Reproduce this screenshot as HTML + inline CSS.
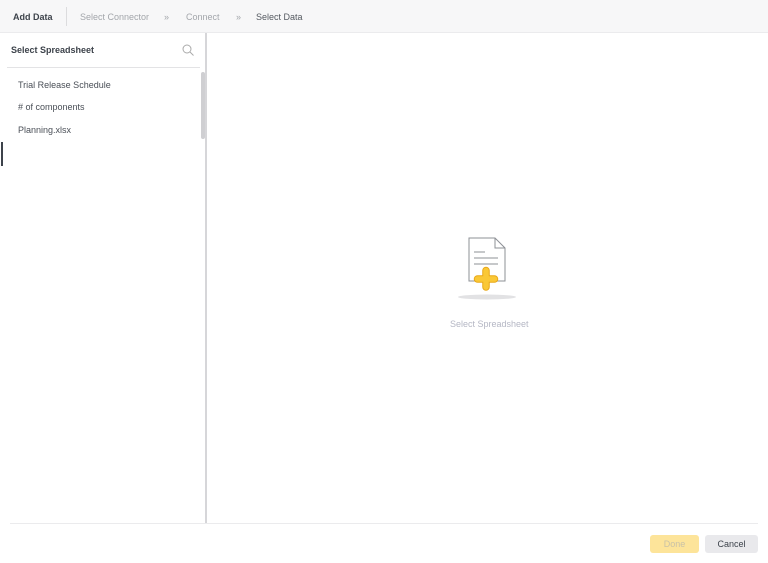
<!DOCTYPE html>
<html><head><style>
*{margin:0;padding:0;box-sizing:border-box}
body{width:768px;height:563px;background:#fff;font-family:"Liberation Sans",sans-serif;font-size:9px;color:#4a4f57;position:relative;overflow:hidden}
.hdr{position:absolute;left:0;top:0;width:768px;height:33px;background:#f7f7f8;border-bottom:1px solid #ebebed}
.hdr span{position:absolute;top:12px}
.left{position:absolute;left:0;top:33px;width:207px;height:490px;border-right:2px solid #d6d6d9}
.foot{position:absolute;left:10px;right:10px;top:523px;border-top:1px solid #ebebed}
</style></head><body>
<div class="hdr">
<span style="left:13px;font-weight:bold;color:#3d434b">Add Data</span>
<div style="position:absolute;left:66px;top:7px;width:1px;height:19px;background:#dcdcde"></div>
<span style="left:80px;color:#a3a6ab">Select Connector</span>
<span style="left:164px;color:#a3a6ab">»</span>
<span style="left:186px;color:#a3a6ab">Connect</span>
<span style="left:236px;color:#a3a6ab">»</span>
<span style="left:256px;color:#555a61">Select Data</span>
</div>
<div class="left">
<div style="position:absolute;left:11px;top:12px;font-weight:bold;color:#3d434b">Select Spreadsheet</div>
<svg style="position:absolute;left:182px;top:11px" width="12" height="12" viewBox="0 0 12 12"><circle cx="5" cy="5" r="4" fill="none" stroke="#aaa" stroke-width="1"/><line x1="8" y1="8" x2="11.5" y2="11.5" stroke="#aaa"/></svg>
<div style="position:absolute;left:7px;top:34px;width:193px;height:1px;background:#e3e3e5"></div>
<div style="position:absolute;left:18px;top:47px">Trial Release Schedule</div>
<div style="position:absolute;left:18px;top:69px"># of components</div>
<div style="position:absolute;left:18px;top:92px">Planning.xlsx</div>
<div style="position:absolute;left:201px;top:39px;width:4px;height:67px;background:#cfcfd2;border-radius:2px"></div>
<div style="position:absolute;left:1px;top:109px;width:2px;height:24px;background:#3d434b"></div>
</div>
<svg style="position:absolute;left:455px;top:235px" width="65" height="66" viewBox="0 0 65 66">
<ellipse cx="32" cy="62" rx="29" ry="2.5" fill="#e2e2e4"/>
<path d="M14 3 H40 L50 13 V46 H14 Z" fill="#fff" stroke="#8d9096" stroke-width="1"/>
<path d="M40 3 V13 H50" fill="none" stroke="#8d9096"/>
<line x1="19" y1="17" x2="30" y2="17" stroke="#8d9096"/>
<line x1="19" y1="23" x2="43" y2="23" stroke="#8d9096"/>
<line x1="19" y1="29" x2="43" y2="29" stroke="#8d9096"/>
<g stroke-linecap="round">
<line x1="31" y1="35.5" x2="31" y2="52" stroke="#e9a818" stroke-width="7.5"/>
<line x1="22.5" y1="44" x2="39.5" y2="44" stroke="#e9a818" stroke-width="7.5"/>
<line x1="31" y1="35.5" x2="31" y2="52" stroke="#fac836" stroke-width="5.5"/>
<line x1="22.5" y1="44" x2="39.5" y2="44" stroke="#fac836" stroke-width="5.5"/>
</g>
</svg>
<div style="position:absolute;left:450px;top:319px;color:#b5b7c4">Select Spreadsheet</div>
<div class="foot"></div>
<div style="position:absolute;left:650px;top:535px;width:49px;height:18px;background:#fde49a;border-radius:3px;color:#c9c2a8;text-align:center;line-height:18px">Done</div>
<div style="position:absolute;left:705px;top:535px;width:53px;height:18px;background:#e9e9ec;border-radius:3px;color:#3d434b;text-align:center;line-height:18px">Cancel</div>
</body></html>
